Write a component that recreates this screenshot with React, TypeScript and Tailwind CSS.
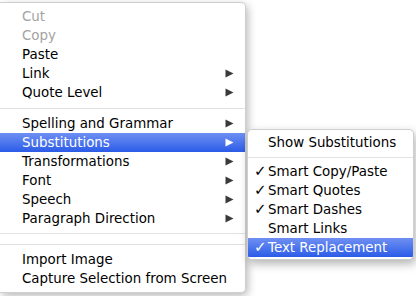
import React from "react";

type Item =
  | { kind: "item"; label: string; disabled?: boolean; submenu?: boolean; active?: boolean }
  | { kind: "sep"; tall?: boolean };

const mainItems: Item[] = [
  { kind: "item", label: "Cut", disabled: true },
  { kind: "item", label: "Copy", disabled: true },
  { kind: "item", label: "Paste" },
  { kind: "item", label: "Link", submenu: true },
  { kind: "item", label: "Quote Level", submenu: true },
  { kind: "sep", tall: true },
  { kind: "item", label: "Spelling and Grammar", submenu: true },
  { kind: "item", label: "Substitutions", submenu: true, active: true },
  { kind: "item", label: "Transformations", submenu: true },
  { kind: "item", label: "Font", submenu: true },
  { kind: "item", label: "Speech", submenu: true },
  { kind: "item", label: "Paragraph Direction", submenu: true },
  { kind: "sep" },
  { kind: "sep" },
  { kind: "item", label: "Import Image" },
  { kind: "item", label: "Capture Selection from Screen" },
];

const subItems = [
  { label: "Smart Copy/Paste", checked: true },
  { label: "Smart Quotes", checked: true },
  { label: "Smart Dashes", checked: true },
  { label: "Smart Links", checked: false },
  { label: "Text Replacement", checked: true, active: true },
];

const Arrow = ({ white }: { white?: boolean }) => (
  <svg width="9" height="9" viewBox="0 0 9 9" className="shrink-0">
    <path d="M0.5 0.5 L8.5 4.5 L0.5 8.5 Z" fill={white ? "#ffffff" : "#3a3a3a"} />
  </svg>
);

const highlight = "bg-gradient-to-b from-[#6f8ff2] to-[#2b5be7] text-white";

const App = () => {
  return (
    <div
      className="relative w-[416px] h-[296px] bg-white overflow-hidden text-[13.4px] text-black"
      style={{ fontFamily: '"DejaVu Sans", "Noto Sans", sans-serif' }}
    >
      <div className="mt-[2px] w-[246px] h-[291px] bg-white border border-l-0 border-[#cfcfcf] rounded-r-[5px] pt-[4px] shadow-[2px_3px_8px_rgba(0,0,0,0.28)]">
        {mainItems.map((it, i) =>
          it.kind === "sep" ? (
            <div key={i} className={`${it.tall ? "h-[12px]" : "h-[11px]"} flex items-center`}>
              <div className="w-full h-px bg-[#e2e2e2]" />
            </div>
          ) : (
            <div
              key={i}
              className={`h-[19px] flex items-center justify-between pl-[22px] pr-[11px] ${
                it.active ? highlight : it.disabled ? "text-[#a3a3a3]" : ""
              }`}
            >
              <span className="leading-none">{it.label}</span>
              {it.submenu && <Arrow white={it.active} />}
            </div>
          )
        )}
      </div>

      <div className="absolute left-[247px] top-[129px] w-[167px] h-[131px] bg-white border border-[#cfcfcf] rounded-[5px] pt-[3px] pb-[3px] shadow-[2px_4px_10px_rgba(0,0,0,0.3)] overflow-hidden">
        <div className="h-[19px] flex items-center pl-[20px]">
          <span className="leading-none">Show Substitutions</span>
        </div>
        <div className="h-[10px] flex items-center">
          <div className="w-full h-px bg-[#e2e2e2]" />
        </div>
        {subItems.map((it) => (
          <div
            key={it.label}
            className={`h-[19px] flex items-center ${it.active ? highlight : ""}`}
          >
            <span className="w-[20px] pl-[6px] leading-none text-[15px] font-bold">
              {it.checked ? "✓" : ""}
            </span>
            <span className="leading-none">{it.label}</span>
          </div>
        ))}
      </div>
    </div>
  );
};

export default App;
